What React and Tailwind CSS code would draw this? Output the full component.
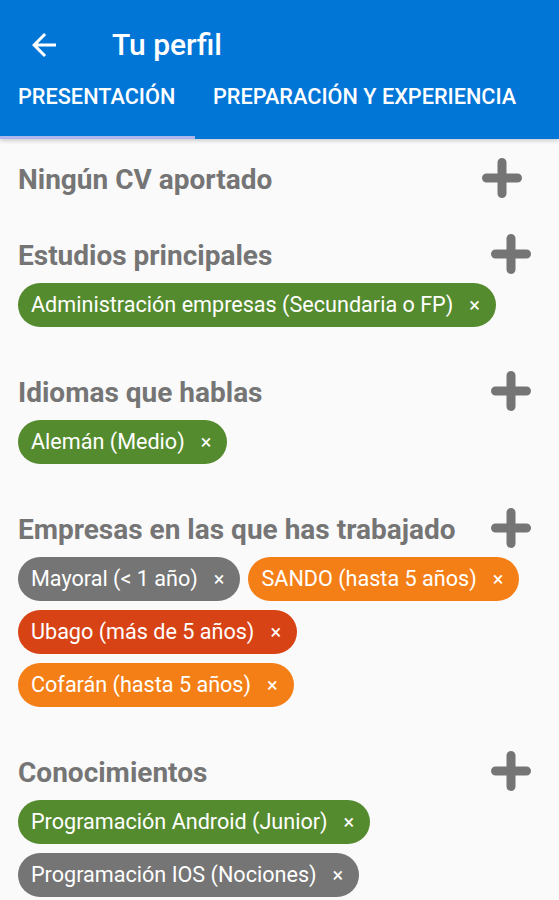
import React from "react";

const sections = [
    { title: "Ningún CV aportado", chips: [], plusOffset: true },
    {
        title: "Estudios principales",
        chips: [{ label: "Administración empresas (Secundaria o FP)", color: "green" }],
    },
    {
        title: "Idiomas que hablas",
        chips: [{ label: "Alemán (Medio)", color: "green" }],
    },
    {
        title: "Empresas en las que has trabajado",
        chips: [
            { label: "Mayoral (< 1 año)", color: "gray" },
            { label: "SANDO (hasta 5 años)", color: "orange" },
            { label: "Ubago (más de 5 años)", color: "red" },
            { label: "Cofarán (hasta 5 años)", color: "orange" },
        ],
    },
    {
        title: "Conocimientos",
        chips: [
            { label: "Programación Android (Junior)", color: "green" },
            { label: "Programación IOS (Nociones)", color: "gray" },
        ],
    },
];

const chipColors = {
    green: "bg-[#558b2f]",
    gray: "bg-[#757575]",
    orange: "bg-[#f57f17]",
    red: "bg-[#d84315]",
};

const PlusIcon = ({ className }) => (
    <svg width="40" height="40" viewBox="0 0 40 40" className={className}>
        <path
            d="M4.5 20H35.5M20 4.5V35.5"
            stroke="#757575"
            strokeWidth="9"
            strokeLinecap="round"
            fill="none"
        />
    </svg>
);

const BackArrow = () => (
    <svg width="36" height="36" viewBox="0 0 24 24" fill="#ffffff">
        <path d="M20 11H7.83l5.59-5.59L12 4l-8 8 8 8 1.41-1.41L7.83 13H20v-2z" />
    </svg>
);

const Chip = ({ label, color }) => (
    <div
        className={`h-[44px] rounded-full flex items-center pl-[13px] pr-[16px] text-white text-[21.6px] ${chipColors[color]}`}
    >
        <span>{label}</span>
        <span className="ml-[16px] text-[20px] leading-none">×</span>
    </div>
);

export default function App() {
    return (
        <div
            className="w-[559px] h-[900px] overflow-hidden bg-[#fafafa]"
            style={{ fontFamily: "Roboto, 'Noto Sans', sans-serif" }}
        >
            <header className="bg-[#0276d7] shadow-[0_2px_4px_rgba(0,0,0,0.18)] relative z-10">
                <div className="h-[85px] flex items-center">
                    <div className="ml-[26px] mt-[5px]">
                        <BackArrow />
                    </div>
                    <h1 className="ml-[50px] text-white text-[30px] font-medium leading-none mt-[5px]">
                        Tu perfil
                    </h1>
                </div>
                <div className="flex">
                    <div className="w-[195px] flex flex-col">
                        <span className="px-[18px] text-white text-[21.7px] font-medium leading-6 pb-[27px] whitespace-nowrap">
                            PRESENTACIÓN
                        </span>
                        <div className="h-[3px] bg-[#aeb6ee]" />
                    </div>
                    <div className="px-[18px]">
                        <span className="text-white text-[21.7px] font-medium leading-6 whitespace-nowrap">
                            PREPARACIÓN Y EXPERIENCIA
                        </span>
                    </div>
                </div>
            </header>

            <main className="pt-[19px] pl-[18px] pr-[28px]">
                {sections.map((section) => (
                    <section key={section.title} className="mb-[36px]">
                        <div className="h-10 flex items-center justify-between">
                            <h2 className="text-[28px] font-bold text-[#757575] leading-none mt-[3px] whitespace-nowrap">
                                {section.title}
                            </h2>
                            <PlusIcon className={section.plusOffset ? "mr-[9px] shrink-0" : "shrink-0"} />
                        </div>
                        {section.chips.length > 0 && (
                            <div className="mt-[9px] pb-[8px] flex flex-wrap gap-x-2 gap-y-[9px]">
                                {section.chips.map((chip) => (
                                    <Chip key={chip.label} {...chip} />
                                ))}
                            </div>
                        )}
                    </section>
                ))}
            </main>
        </div>
    );
}
